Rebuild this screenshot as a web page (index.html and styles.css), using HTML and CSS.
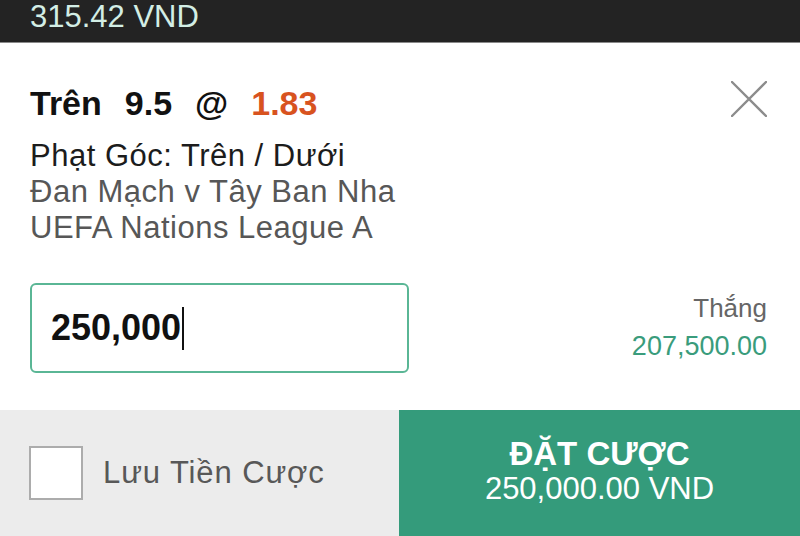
FILE: index.html
```html
<!DOCTYPE html>
<html lang="vi">
<head>
    <meta charset="UTF-8">
    <meta name="viewport" content="width=device-width, initial-scale=1.0">
    <title>Phiếu Cược</title>
    <link rel="stylesheet" href="styles.css">
</head>
<body>
    <div class="topbar">
        <span class="balance">315.42 VND</span>
    </div>

    <div class="slip">
        <div class="slip-head">
            <h1 class="pick">
                <span>Trên</span>
                <span>9.5</span>
                <span>@</span>
                <span class="odds">1.83</span>
            </h1>
            <button class="close" aria-label="Đóng">
                <svg width="36" height="36" viewBox="0 0 36 36">
                    <path d="M1 1 L35 35 M35 1 L1 35" stroke="#8c8c8c" stroke-width="2.4" stroke-linecap="round" fill="none"/>
                </svg>
            </button>
        </div>

        <div class="details">
            <p class="market">Phạt Góc: Trên / Dưới</p>
            <p>Đan Mạch v Tây Ban Nha</p>
            <p>UEFA Nations League A</p>
        </div>

        <div class="stake-row">
            <div class="stake-input">
                <span class="stake-value">250,000</span>
                <span class="caret"></span>
            </div>
            <div class="win">
                <p class="win-label">Thắng</p>
                <p class="win-amount">207,500.00</p>
            </div>
        </div>
    </div>

    <div class="footer">
        <label class="remember">
            <span class="box"></span>
            <span>Lưu Tiền Cược</span>
        </label>
        <button class="place-bet">
            <span class="place-title">ĐẶT CƯỢC</span>
            <span class="place-sum">250,000.00 VND</span>
        </button>
    </div>
</body>
</html>
```

FILE: styles.css
```css
* {
    box-sizing: border-box;
}
body {
    margin: 0;
    width: 800px;
    height: 536px;
    overflow: hidden;
    background: white;
    font-family: "Liberation Sans", Arial, sans-serif;
    color: #1c1c1c;
}
p {
    margin: 0;
}
.topbar {
    height: 43px;
    background: #232323;
    border-bottom: 1px solid #8a8a8a;
    padding: 1px 0 0 30px;
}
.balance {
    display: block;
    font-size: 31px;
    line-height: 31px;
    color: #d3eee5;
}
.slip {
    padding: 0 33px 0 30px;
}
.slip-head {
    display: flex;
    justify-content: space-between;
    align-items: flex-start;
    margin-top: 40px;
}
.pick {
    display: flex;
    gap: 23px;
    margin: 0;
    font-size: 34px;
    line-height: 40px;
    font-weight: bold;
    color: #111;
}
.odds {
    color: #d8531f;
}
.close {
    background: none;
    border: none;
    padding: 0;
    margin-top: -2px;
    cursor: pointer;
}
.details {
    margin-top: 15px;
    font-size: 31px;
    line-height: 36px;
    letter-spacing: 0.5px;
    color: #575757;
}
.details .market {
    color: #1c1c1c;
}
.stake-row {
    display: flex;
    justify-content: space-between;
    align-items: flex-start;
    margin-top: 37px;
}
.stake-input {
    width: 379px;
    height: 90px;
    border: 2px solid #5ab695;
    border-radius: 6px;
    padding-left: 19px;
    display: flex;
    align-items: center;
}
.stake-value {
    font-size: 36px;
    line-height: 40px;
    font-weight: bold;
    color: #111;
}
.caret {
    width: 2px;
    height: 43px;
    margin-left: 1px;
    background: #111;
}
.win {
    text-align: right;
    padding-top: 10px;
    font-size: 26px;
    line-height: 30px;
}
.win-label {
    color: #666;
}
.win-amount {
    margin-top: 8px;
    font-size: 27px;
    color: #3a9c7c;
}
.footer {
    display: grid;
    grid-template-columns: 399px 1fr;
    height: 126px;
    margin-top: 37px;
}
.remember {
    display: flex;
    align-items: center;
    gap: 20px;
    padding-left: 29px;
    background: #ececec;
    font-size: 31px;
    letter-spacing: 0.9px;
    color: #585858;
}
.box {
    width: 54px;
    height: 54px;
    background: white;
    border: 2px solid #acacac;
}
.place-bet {
    display: flex;
    flex-direction: column;
    align-items: center;
    justify-content: center;
    border: none;
    background: #349b7b;
    color: white;
    font-family: inherit;
    padding: 0 0 4px;
    cursor: pointer;
}
.place-title {
    font-size: 33px;
    line-height: 36px;
    font-weight: bold;
}
.place-sum {
    font-size: 31px;
    line-height: 34px;
}
```
